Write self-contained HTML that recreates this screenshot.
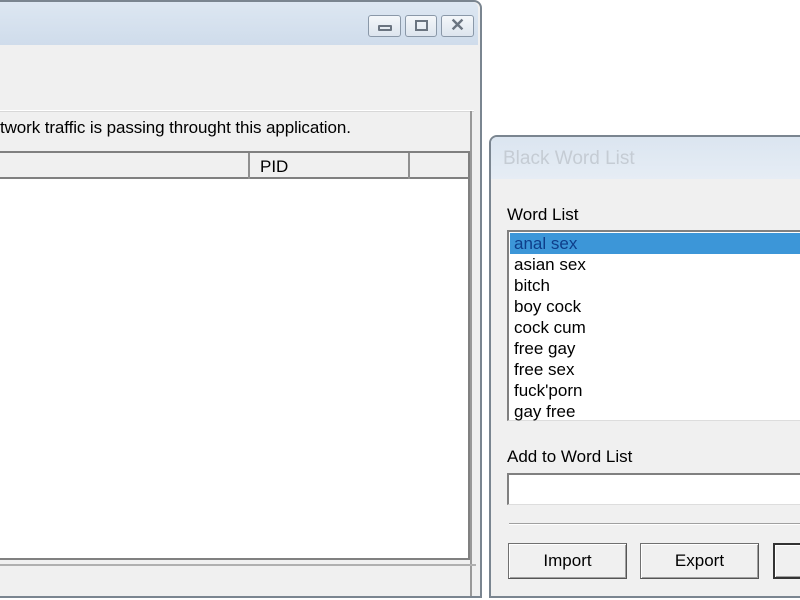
<!DOCTYPE html>
<html><head><style>
*{margin:0;padding:0;box-sizing:border-box}
body{width:800px;height:600px;background:#fff;position:relative;overflow:hidden;font-family:"Liberation Sans",Arial,sans-serif;font-size:17px;color:#000}
.a{position:absolute}
.btn{position:absolute;border:1px solid #707070;border-right-color:#555;border-bottom-color:#555;background:#f0f0f0;box-shadow:inset 1px 1px 0 #fff,inset -1px -1px 0 #a0a0a0;text-align:center;line-height:33px;font-size:17px}
.cb{position:absolute;top:15px;height:22px;border:1px solid #8a98a8;border-radius:3px;background:linear-gradient(#f4f7fa,#dde5ee)}
</style></head><body>
<div class="a" style="left:-10px;top:0;width:492px;height:598px;border:2px solid #7a8590;border-radius:0 8px 0 0;background:#f0f0f0"></div>
<div class="a" style="left:0;top:2px;width:478px;height:43px;background:linear-gradient(#dde7f2,#cfdceb);border-radius:0 6px 0 0"></div>
<div class="cb" style="left:368px;width:33px"><div class="a" style="left:9px;top:9px;width:14px;height:6px;border:2px solid #6a7480;border-radius:1px"></div></div>
<div class="cb" style="left:405px;width:32px"><div class="a" style="left:9px;top:4px;width:13px;height:11px;border:2px solid #6a7480"></div></div>
<div class="cb" style="left:441px;width:33px;text-align:center;line-height:18px;font-size:18px;font-weight:bold;color:#6a7480">✕</div>
<div class="a" style="left:0;top:110px;width:474px;height:1px;background:#fff"></div>
<div class="a" style="left:0;top:111px;width:474px;height:1px;background:#d8d8d8"></div>
<div class="a" style="left:0;top:118px;font-size:17px;letter-spacing:-0.1px">twork traffic is passing throught this application.</div>
<div class="a" style="left:470px;top:111px;width:2px;height:485px;background:#999"></div>
<div class="a" style="left:0;top:151px;width:470px;height:409px;border:2px solid #808080;border-left:none;background:#fff"></div>
<div class="a" style="left:0;top:153px;width:468px;height:26px;background:#f0f0f0;border-bottom:2px solid #808080"></div>
<div class="a" style="left:248px;top:153px;width:2px;height:26px;background:#909090"></div>
<div class="a" style="left:408px;top:153px;width:2px;height:26px;background:#909090"></div>
<div class="a" style="left:260px;top:157px">PID</div>
<div class="a" style="left:0;top:564px;width:476px;height:2px;background:#b0b0b0"></div>
<div class="a" style="left:489px;top:135px;width:330px;height:463px;border:2px solid #7a8590;border-radius:8px 0 0 0;background:#f0f0f0"></div>
<div class="a" style="left:491px;top:137px;width:320px;height:42px;background:linear-gradient(#dbe5f0,#e6edf5);border-radius:6px 0 0 0"></div>
<div class="a" style="left:503px;top:148px;font-size:19px;color:#c5ccd4">Black Word List</div>
<div class="a" style="left:507px;top:205px">Word List</div>
<div class="a" style="left:507px;top:230px;width:300px;height:191px;border:2px solid #808080;border-right:none;border-bottom:1px solid #ddd;background:#fff"></div>
<div class="a" style="left:510px;top:233px;width:295px;height:21px;background:#3c96d8"></div>
<div class="a" style="left:514px;top:233px;line-height:21px;font-size:17px">
<div style="color:#0e3e8a">anal sex</div><div>asian sex</div><div>bitch</div><div>boy cock</div><div>cock cum</div><div>free gay</div><div>free sex</div><div>fuck'porn</div><div>gay free</div></div>
<div class="a" style="left:507px;top:447px">Add to Word List</div>
<div class="a" style="left:507px;top:473px;width:300px;height:32px;border:2px solid #808080;border-right:none;border-bottom:1px solid #ddd;background:#fff"></div>
<div class="a" style="left:509px;top:523px;width:300px;height:2px;border-top:1px solid #a0a0a0;border-bottom:1px solid #fff"></div>
<div class="btn" style="left:508px;top:543px;width:119px;height:36px">Import</div>
<div class="btn" style="left:640px;top:543px;width:119px;height:36px">Export</div>
<div class="btn" style="left:773px;top:543px;width:40px;height:36px;border:2px solid #333"></div>
</body></html>
